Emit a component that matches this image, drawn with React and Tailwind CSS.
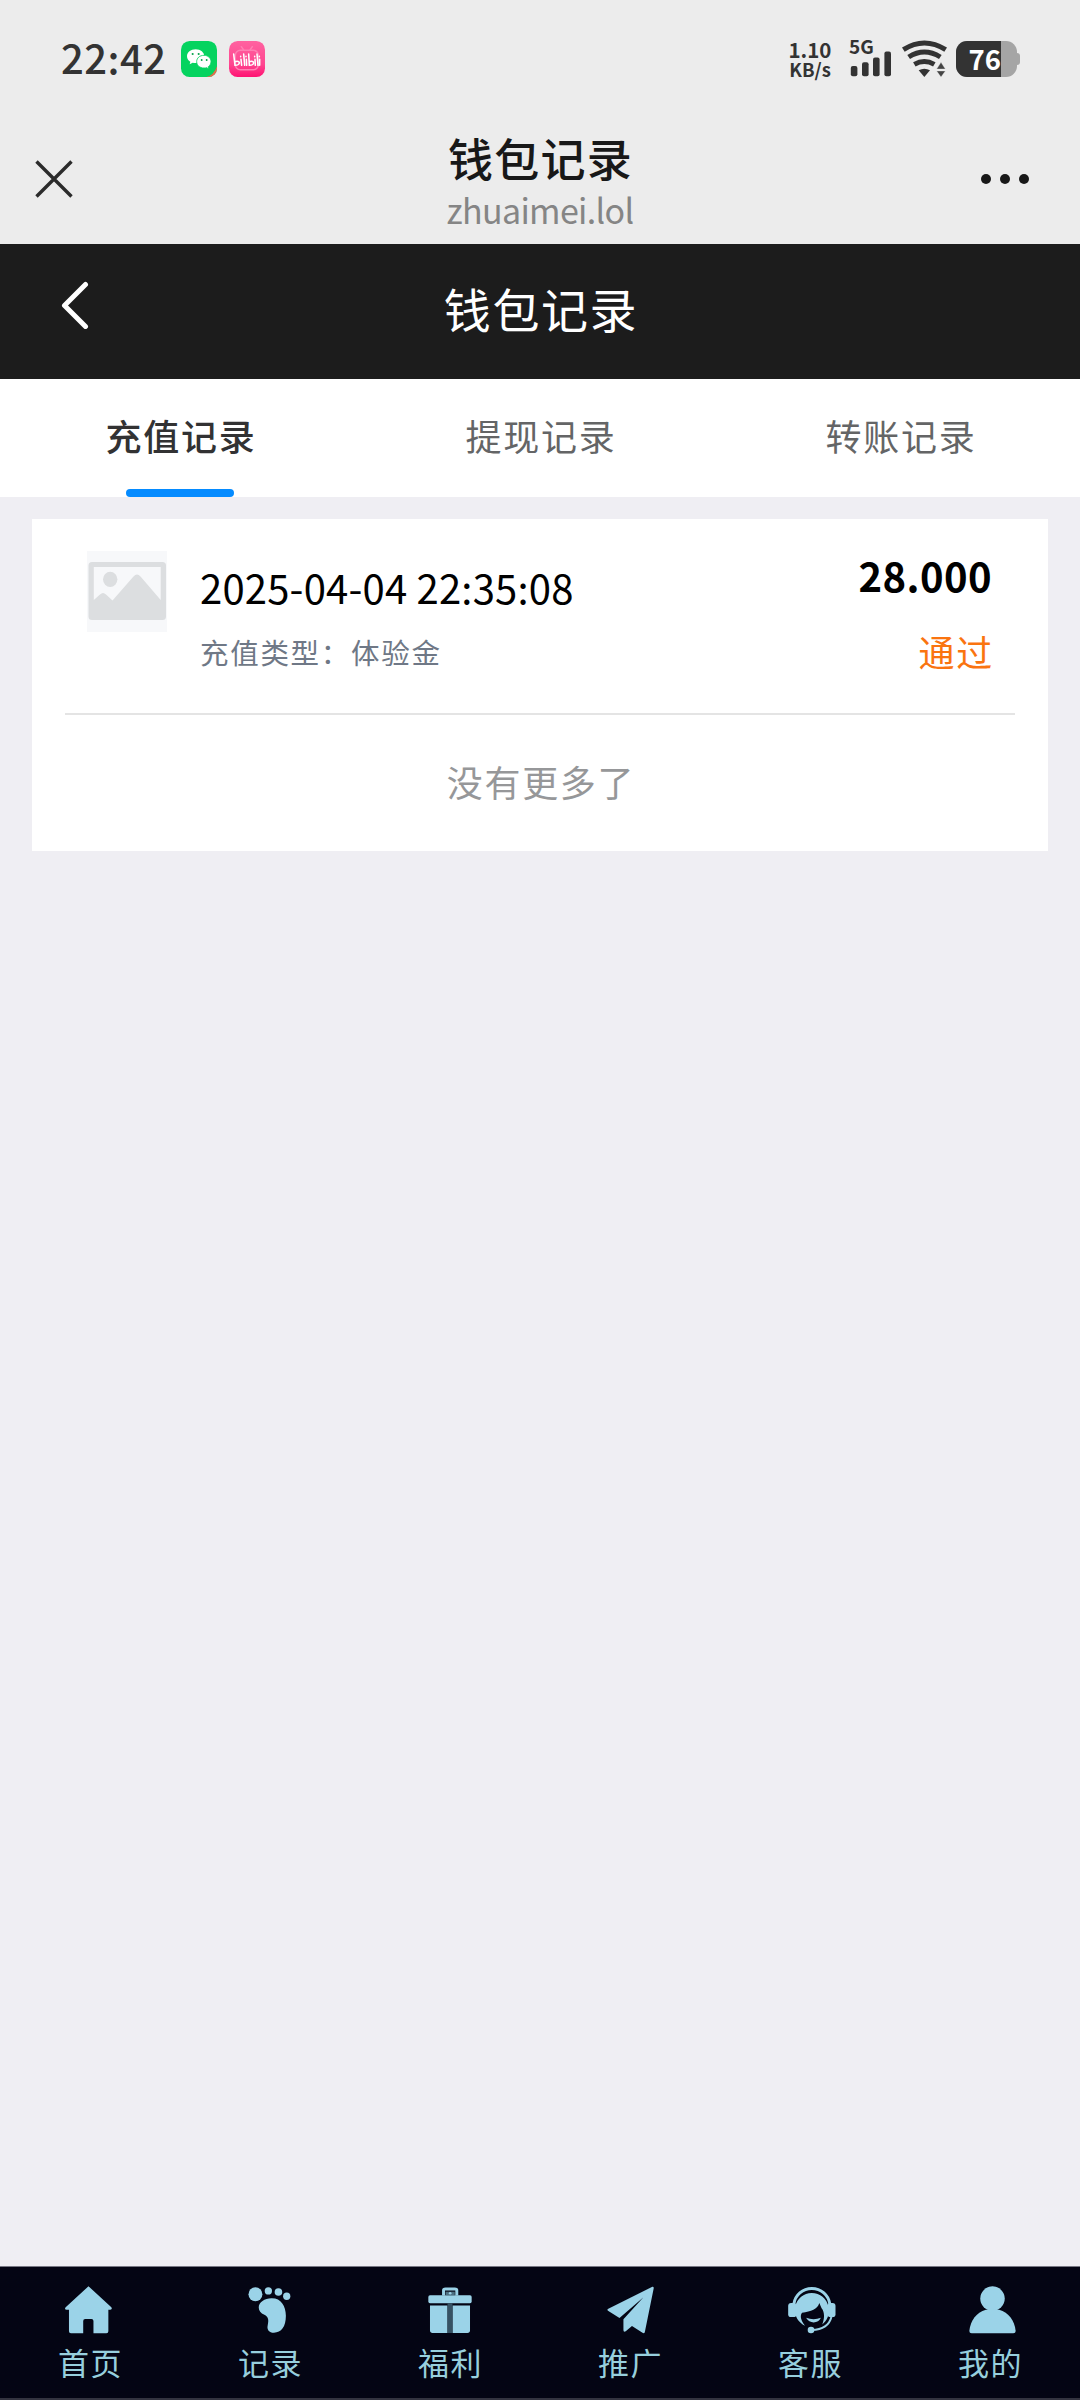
import React from "react";

const AQUA = "#9bd3e8";

function WeChatIcon() {
  return (
    <svg className="h-[36px] w-[36px]" viewBox="0 0 108 108">
      <defs>
        <clipPath id="wxClip">
          <rect width="108" height="108" rx="26" />
        </clipPath>
      </defs>
      <g clipPath="url(#wxClip)">
        <rect width="108" height="108" fill="#05d35f" />
        <path d="M76 108Q98 104 108 76V108Z" fill="#e8694a" />
      </g>
      <path d="M44 25c-15 0-26 9-26 21 0 7 4 13 10 16l-2 8 9-5c3 1 6 1 9 1 15 0 26-9 26-20S59 25 44 25z" fill="#fff" />
      <circle cx="35" cy="39" r="3.2" fill="#05a34a" />
      <circle cx="53" cy="39" r="3.2" fill="#05a34a" />
      <path d="M69 43c-13 0-22 8-22 19s9 19 22 19c3 0 5 0 8-1l7 4-2-7c5-4 8-9 8-15 0-11-9-19-21-19z" fill="#fff" stroke="#05d35f" strokeWidth="2.5" />
      <circle cx="62" cy="57" r="2.8" fill="#05a34a" />
      <circle cx="77" cy="57" r="2.8" fill="#05a34a" />
    </svg>
  );
}

function BilibiliIcon() {
  return (
    <svg className="h-[36px] w-[36px]" viewBox="0 0 108 108">
      <defs>
        <linearGradient id="biliBg" x1="0" y1="0" x2="0" y2="1">
          <stop offset="0" stopColor="#ff62a0" />
          <stop offset="0.65" stopColor="#ff4690" />
          <stop offset="1" stopColor="#ff1272" />
        </linearGradient>
      </defs>
      <rect width="108" height="108" rx="26" fill="url(#biliBg)" />
      <g fill="none" stroke="#ff7fb2" strokeWidth="4.5" strokeLinecap="round">
        <rect x="19" y="28" width="69" height="58" rx="15" />
        <path d="M37 17l7 10M70 17l-7 10" />
      </g>
      <g fill="none" stroke="#fff" strokeWidth="4.6" strokeLinecap="round">
        <path d="M14 39l4 34c9 0 13-5 13-8s-5-6-13-3" />
        <path d="M36 55l2 18M44 39l3 34M52 55l1 18M35 46v1M51 46v1" />
        <path d="M59 39l2 34c9 0 13-5 13-8s-5-6-13-3" />
        <path d="M78 55l1 18M84 39l3 34M92 55v18M77 46v1M91 46v1" />
      </g>
    </svg>
  );
}

function SignalIcon() {
  return (
    <svg className="h-[26px] w-[42px]" viewBox="0 0 42 26" fill="#333">
      <rect x="0.8" y="15" width="6.6" height="10.3" rx="2" />
      <rect x="12" y="11.3" width="6.6" height="14" rx="2" />
      <rect x="23" y="6.6" width="6.6" height="18.7" rx="2" />
      <rect x="34.4" y="0.6" width="6.6" height="24.7" rx="2" />
    </svg>
  );
}

function WifiIcon() {
  return (
    <svg className="h-[37px] w-[45px]" viewBox="426 118 135 111">
      <g fill="none" stroke="#333" strokeWidth="15">
        <path d="M430 147Q493 107 557 147" />
        <path d="M446 169Q493 139 541 169" />
        <path d="M463 191Q493 174 523 191" />
      </g>
      <path d="M476 209Q493 200 510 209L493 229Z" fill="#333" />
      <path d="M543 185l13 20h-26zM530 211h26l-13 18z" fill="#444" stroke="#ececec" strokeWidth="1" />
    </svg>
  );
}

function Battery() {
  return (
    <div className="flex items-center">
      <div className="flex h-[36px] w-[61px] rounded-[11px] bg-[#a5a5a5]">
        <div className="flex h-full w-[45px] items-center justify-end rounded-l-[11px] bg-[#333]">
          <span className="-mt-[3px] text-[27.5px] leading-[36px] font-bold text-white">76</span>
        </div>
      </div>
      <div className="h-[12px] w-[3px] rounded-r-[3px] bg-[#a5a5a5]" />
    </div>
  );
}

function StatusBar() {
  return (
    <div className="flex h-[118px] items-start justify-between pr-[60px] pl-[61px] text-[#333]">
      <div className="flex pt-[41px]">
        <span className="-mt-[2px] w-[120px] text-[40px] leading-[36px] font-medium tracking-[0.5px]">22:42</span>
        <WeChatIcon />
        <span className="w-[11.5px]" />
        <BilibiliIcon />
      </div>
      <div className="flex pt-[40px]">
        <div className="flex w-[61px] flex-col items-center pr-[17px] font-bold">
          <span className="-mt-px text-[20.5px] leading-[20px]">1.10</span>
          <span className="text-[18.5px] leading-[20px]">KB/s</span>
        </div>
        <div className="flex w-[53px] flex-col">
          <span className="-mt-[3px] h-[14px] text-[19px] leading-[17px] font-bold">5G</span>
          <span className="pl-[1px]"><SignalIcon /></span>
        </div>
        <div className="w-[54px]"><WifiIcon /></div>
        <div className="pt-[1px]"><Battery /></div>
      </div>
    </div>
  );
}

function BrowserBar() {
  return (
    <div className="grid h-[126px] grid-cols-[1fr_auto_1fr] items-start pr-[51px] pl-[51px]">
      <svg className="mt-[42px] -ml-[16px] h-[38px] w-[38px]" viewBox="0 0 38 38" stroke="#2b2b2b" strokeWidth="3.4">
        <path d="M1.500 1.500l35 35M36.500 1.500l-35 35" />
      </svg>
      <div className="flex flex-col items-center">
        <h1 className="mt-[15px] pl-[1px] text-[45px] leading-[50px] font-medium tracking-[1.3px] text-[#181818]">钱包记录</h1>
        <span className="mt-[7px] text-[34px] leading-[40px] tracking-[-0.65px] text-[#858585]">zhuaimei.lol</span>
      </div>
      <div className="mt-[56px] flex justify-end gap-[9px]">
        <i className="h-[10px] w-[10px] rounded-full bg-[#181818]" />
        <i className="h-[10px] w-[10px] rounded-full bg-[#181818]" />
        <i className="h-[10px] w-[10px] rounded-full bg-[#181818]" />
      </div>
    </div>
  );
}

function PageHeader() {
  return (
    <header className="grid h-[135px] grid-cols-[1fr_auto_1fr] items-start bg-[#1c1c1c]">
      <svg className="mt-[37px] ml-[60px] h-[48px] w-[29px]" viewBox="0 0 29 48" fill="none" stroke="#fff" strokeWidth="5" strokeLinecap="round" strokeLinejoin="round">
        <path d="M25.500 3.500L4.500 24.500 25.500 45.500" />
      </svg>
      <h2 className="mt-[34px] pl-[2px] text-[47px] leading-[60px] tracking-[1.6px] text-white">钱包记录</h2>
    </header>
  );
}

function Tabs() {
  return (
    <nav className="grid h-[118px] grid-cols-3 bg-white text-center text-[36px] leading-[50px] tracking-[1.7px]">
      <div className="flex flex-col items-center">
        <span className="mt-[31px] pl-[2px] font-medium text-[#323233]">充值记录</span>
        <div className="mt-[29px] h-[8px] w-[108px] shrink-0 rounded-full bg-[#058bff]" />
      </div>
      <span className="mt-[31px] pl-[2px] text-[#646566]">提现记录</span>
      <span className="mt-[31px] pl-[2px] text-[#646566]">转账记录</span>
    </nav>
  );
}

function PlaceholderImage() {
  return (
    <svg className="h-[81px] w-[80px]" viewBox="87 551 80 81">
      <rect x="87" y="551" width="80" height="81" fill="#f7f8fa" />
      <path
        fillRule="evenodd"
        fill="#dcdee0"
        d="M92 562H162.500Q166 562 166 565.500V616.500Q166 620 162.500 620H92Q88.500 620 88.500 616.500V565.500Q88.500 562 92 562ZM93.800 567V600L100 594.500Q103 591.500 106 594.500L112.500 600.500L133.500 576.500Q137 572.500 140.500 576.500L160.700 600V567Z"
      />
      <ellipse cx="110.200" cy="579.300" rx="7.200" ry="7.600" fill="#dcdee0" />
    </svg>
  );
}

function RecordCard() {
  return (
    <section className="mx-[32px] mt-[22px] h-[332px] bg-white px-[33px]">
      <div className="flex h-[196px] items-start border-b-2 border-[#e4e4e4] pr-[23px] pl-[22px]">
        <div className="mt-[32px]"><PlaceholderImage /></div>
        <div className="ml-[33px] flex flex-1 flex-col">
          <span className="mt-[43px] text-[40px] leading-[50px] tracking-[0.2px] text-black">2025-04-04 22:35:08</span>
          <span className="mt-[22px] text-[28.5px] leading-[36px] tracking-[1.7px] text-[#6f7886]">充值类型：体验金</span>
        </div>
        <div className="flex flex-col items-end">
          <span className="mt-[31px] text-[40px] leading-[50px] font-bold tracking-[0.4px] text-black">28.000</span>
          <span className="-mr-[2px] mt-[26px] text-[36px] leading-[50px] tracking-[1.7px] text-[#fa7410]">通过</span>
        </div>
      </div>
      <p className="pt-[41px] pl-[2px] text-center text-[36px] leading-[50px] tracking-[1.7px] text-[#969799]">没有更多了</p>
    </section>
  );
}

function HomeIcon() {
  return (
    <svg className="-ml-[3px] h-[48px] w-[47px]" viewBox="195 109 142 145" fill={AQUA}>
      <path d="M266 110L335 173Q339 180 332 181H326V246Q326 252 320 252H281V215Q281 209 275 209H256Q250 209 250 215V252H213Q207 252 207 246V181H200Q192 180 197 173Z" />
    </svg>
  );
}

function FootIcon() {
  return (
    <svg className="-ml-px h-[48px] w-[43px]" viewBox="745 109 129 145" fill={AQUA}>
      <circle cx="767" cy="134" r="21" />
      <circle cx="806" cy="124" r="11" />
      <circle cx="836.500" cy="127" r="11.500" />
      <circle cx="861.500" cy="140" r="11" />
      <path d="M815 146C844 145 859 169 859 199C859 232 845 250 823 250C808 250 801 240 804 228C808 211 806 202 794 196C783 191 777 184 777 174C777 158 795 146 815 146Z" />
    </svg>
  );
}

function GiftIcon() {
  return (
    <svg className="h-[48px] w-[44px]" viewBox="205 109 133 145" fill={AQUA}>
      <rect x="206" y="137" width="131" height="24" rx="5" />
      <path d="M211 168H264V251H219Q211 251 211 243ZM279 168H332V243Q332 251 324 251H279Z" />
      <path d="M264 161H279V251H264Z" fill="#365263" />
      <path d="M252 138V122Q252 118 258 118H286Q292 118 292 122V138" fill="none" stroke={AQUA} strokeWidth="9" />
      <path d="M258 126H286V137H258Z" fill="#4d7082" />
      <circle cx="272" cy="131" r="4" />
    </svg>
  );
}

function PlaneIcon() {
  return (
    <svg className="h-[48px] w-[47px]" viewBox="740 109 143 145" fill={AQUA}>
      <path d="M878 111Q883 110 882 116L855 249Q853 254 848 251L816 230L797 246Q790 250 790 242V210L851 143L778 206L743 184Q739 180 744 178Z" />
    </svg>
  );
}

function ServiceIcon() {
  return (
    <svg className="ml-[3px] h-[48px] w-[48px]" viewBox="203 109 144 145" fill={AQUA}>
      <path d="M220 164A55 55 0 0 1 329 164" fill="none" stroke={AQUA} strokeWidth="9" />
      <rect x="203" y="160" width="25" height="43" rx="9" />
      <rect x="322" y="160" width="24" height="43" rx="9" />
      <path d="M224 172C230 146 250 130 274 130C300 130 319 146 325 172L323 202C318 214 312 220 306 225C313 208 314 188 304 176L297 160C292 180 272 185 245 190C237 200 243 216 254 229C237 222 226 205 224 190Z" />
      <path d="M257 205Q280 214 302 205Q295 219 280 219Q266 219 257 205Z" />
      <path d="M334 201C328 226 306 241 274 242" fill="none" stroke={AQUA} strokeWidth="6" />
      <circle cx="272" cy="242" r="10" />
    </svg>
  );
}

function UserIcon() {
  return (
    <svg className="ml-[5px] h-[48px] w-[47px]" viewBox="747 109 142 145" fill={AQUA}>
      <circle cx="818" cy="147" r="37" />
      <path d="M798 181H838C867 189 885 214 888 245Q888 252 881 252H755Q748 252 748 245C751 214 769 189 798 181Z" />
    </svg>
  );
}

const NAV = [
  ["首页", HomeIcon],
  ["记录", FootIcon],
  ["福利", GiftIcon],
  ["推广", PlaneIcon],
  ["客服", ServiceIcon],
  ["我的", UserIcon],
];

function BottomNav() {
  return (
    <nav className="grid h-[134px] grid-cols-6 border-t border-b-2 border-t-[#777783] border-b-[#33333f] bg-[#040514]">
      {NAV.map(([label, Icon]) => (
        <div key={label} className="flex flex-col items-center pt-[19px]">
          <Icon />
          <span className="mt-[6px] pl-[1px] text-[31px] leading-[44px] tracking-[1.6px] text-[#97cfdd]">{label}</span>
        </div>
      ))}
    </nav>
  );
}

export default function App() {
  return (
    <div className="flex h-[2400px] w-[1080px] flex-col overflow-hidden bg-[#efeef3] font-['Noto_Sans_CJK_SC',sans-serif]">
      <div className="bg-[#ececec]">
        <StatusBar />
        <BrowserBar />
      </div>
      <PageHeader />
      <Tabs />
      <main className="flex-1">
        <RecordCard />
      </main>
      <BottomNav />
    </div>
  );
}
